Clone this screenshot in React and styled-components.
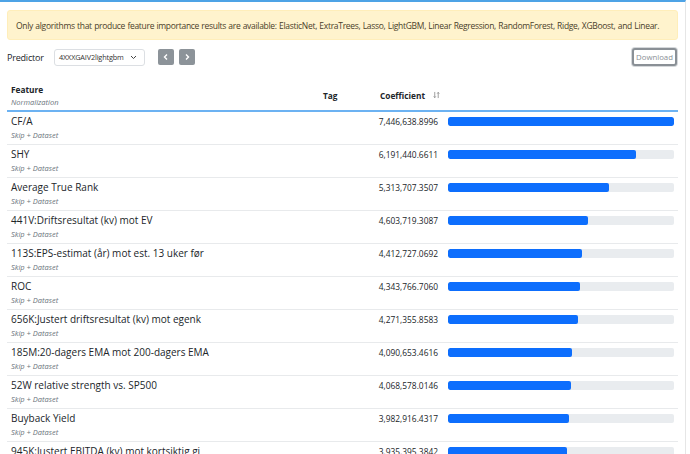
import React from 'react'
import styled, { createGlobalStyle } from 'styled-components'

const rows = [
  { name: 'CF/A', value: 7446638.8996 },
  { name: 'SHY', value: 6191440.6611 },
  { name: 'Average True Rank', value: 5313707.3507 },
  { name: '441V:Driftsresultat (kv) mot EV', value: 4603719.3087 },
  { name: '113S:EPS-estimat (år) mot est. 13 uker før', value: 4412727.0692 },
  { name: 'ROC', value: 4343766.706 },
  { name: '656K:Justert driftsresultat (kv) mot egenk', value: 4271355.8583 },
  { name: '185M:20-dagers EMA mot 200-dagers EMA', value: 4090653.4616 },
  { name: '52W relative strength vs. SP500', value: 4068578.0146 },
  { name: 'Buyback Yield', value: 3982916.4317 },
  { name: '945K:Justert EBITDA (kv) mot kortsiktig gj', value: 3935395.3842 },
]

const max = rows[0].value

const fmt = (v) =>
  v.toLocaleString('en-US', { minimumFractionDigits: 4, maximumFractionDigits: 4 })

const COLS = '303px 60px 70px 238px'

// Global
const GlobalStyle = createGlobalStyle`
  html, body {
    margin: 0;
    padding: 0;
    background: #ffffff;
    overflow: hidden;
  }
  body {
    font-family: "Open Sans", "Noto Sans", sans-serif;
    color: #212529;
  }
`

// Layout
const Page = styled.div`
  width: 686px;
  height: 454px;
  border-top: 2px solid #4ea3e6;
  border-right: 1px solid #e6e6e6;
  box-sizing: border-box;
  padding: 8px 7px 0 7px;
  overflow: hidden;
`

const Alert = styled.div`
  background: #fff3cd;
  border: 1px solid #ffeeba;
  border-radius: 3px;
  color: #4a402a;
  font-size: 8.5px;
  letter-spacing: -0.3px;
  word-spacing: 0.4px;
  height: 30px;
  box-sizing: border-box;
  display: flex;
  align-items: center;
  padding: 0 8px;
  white-space: nowrap;
`

const Toolbar = styled.div`
  display: flex;
  align-items: center;
  margin-top: 8px;
  height: 18px;
`

const Label = styled.span`
  font-size: 9px;
  letter-spacing: -0.2px;
  width: 47px;
`

const Select = styled.div`
  width: 91px;
  height: 17px;
  box-sizing: border-box;
  border: 1px solid #dcdfe3;
  border-radius: 3px;
  display: flex;
  align-items: center;
  justify-content: space-between;
  padding: 0 7px 0 4px;
  font-size: 7.3px;
  letter-spacing: -0.15px;
  color: #333;
`

const NavButton = styled.button`
  width: 16px;
  height: 16px;
  margin-left: ${({ $first }) => ($first ? '13px' : '5px')};
  padding: 0;
  border: none;
  border-radius: 2px;
  background: #8c9399;
  display: flex;
  align-items: center;
  justify-content: center;
`

const DownloadButton = styled.button`
  margin-left: auto;
  margin-right: 1px;
  width: 45px;
  height: 18px;
  box-sizing: border-box;
  border: 2px solid #8a9096;
  border-radius: 3px;
  background: #fff;
  color: #8a9096;
  font-family: inherit;
  font-size: 7.8px;
  padding: 0;
  box-shadow: 0 0 0 1px #d5d8db;
`

const Table = styled.div`
  margin-top: 14px;
  width: 671px;
`

const HeaderRow = styled.div`
  display: grid;
  grid-template-columns: ${COLS};
  align-items: center;
  height: 30px;
  border-bottom: 2px solid #6cb2f2;
  font-size: 8.3px;
  font-weight: 700;
`

const HeadCell = styled.div`
  padding-left: ${({ $pad }) => $pad || '4px'};
  display: flex;
  flex-direction: ${({ $inline }) => ($inline ? 'row' : 'column')};
  align-items: ${({ $inline }) => ($inline ? 'center' : 'flex-start')};
`

const SubHead = styled.span`
  font-size: 7.5px;
  font-weight: 400;
  font-style: italic;
  color: #6c757d;
  margin-top: 2px;
`

const SortIcon = styled.svg`
  margin-left: 8px;
`

const Row = styled.div`
  display: grid;
  grid-template-columns: ${COLS};
  height: 33px;
  box-sizing: border-box;
  border-bottom: 1px solid #e8eaec;
  padding-top: 2px;
`

const NameCell = styled.div`
  padding-left: 4px;
  display: flex;
  flex-direction: column;
  font-size: 10px;
`

const Sub = styled.span`
  font-size: 7.5px;
  font-style: italic;
  color: #6c757d;
  margin-top: 2px;
`

const Value = styled.div`
  grid-column: 3;
  font-size: 8.4px;
  text-align: right;
  padding: 2px 2px 0 0;
`

const BarTrack = styled.div`
  margin: 3px 4px 0 8px;
  height: 9px;
  background: #e9ecef;
  border-radius: 2px;
  overflow: hidden;
`

const BarFill = styled.div`
  height: 100%;
  background: #0d6efd;
  border-radius: 2px;
`

const Chevron = ({ dir }) => (
  <svg width="8" height="8" viewBox="0 0 8 8">
    <path
      d={dir === 'left' ? 'M5 1.5 L2.5 4 L5 6.5' : 'M3 1.5 L5.5 4 L3 6.5'}
      fill="none"
      stroke="#fff"
      strokeWidth="1.4"
    />
  </svg>
)

export default function App() {
  return (
    <Page>
      <GlobalStyle />
      <Alert>
        Only algorithms that produce feature importance results are available: ElasticNet, ExtraTrees, Lasso, LightGBM, Linear Regression, RandomForest, Ridge, XGBoost, and Linear.
      </Alert>
      <Toolbar>
        <Label>Predictor</Label>
        <Select>
          <span>4XXXGAIV2lightgbm</span>
          <svg width="7" height="5" viewBox="0 0 7 5">
            <path d="M1 1 L3.5 3.5 L6 1" fill="none" stroke="#444" strokeWidth="1" />
          </svg>
        </Select>
        <NavButton $first>
          <Chevron dir="left" />
        </NavButton>
        <NavButton>
          <Chevron dir="right" />
        </NavButton>
        <DownloadButton>Download</DownloadButton>
      </Toolbar>
      <Table>
        <HeaderRow>
          <HeadCell>
            Feature
            <SubHead>Normalization</SubHead>
          </HeadCell>
          <HeadCell $pad="13px">Tag</HeadCell>
          <HeadCell $pad="10px" $inline>
            Coefficient
            <SortIcon width="8" height="8" viewBox="0 0 8 8">
              <path d="M2 0.5 V7 M0.8 5.6 L2 7 L3.2 5.6" fill="none" stroke="#777" strokeWidth="0.8" />
              <path d="M6 7.5 V1 M4.8 2.4 L6 1 L7.2 2.4" fill="none" stroke="#777" strokeWidth="0.8" />
            </SortIcon>
          </HeadCell>
          <div />
        </HeaderRow>
        {rows.map((r) => (
          <Row key={r.name}>
            <NameCell>
              {r.name}
              <Sub>Skip + Dataset</Sub>
            </NameCell>
            <Value>{fmt(r.value)}</Value>
            <BarTrack>
              <BarFill style={{ width: `${(r.value / max) * 100}%` }} />
            </BarTrack>
          </Row>
        ))}
      </Table>
    </Page>
  )
}
